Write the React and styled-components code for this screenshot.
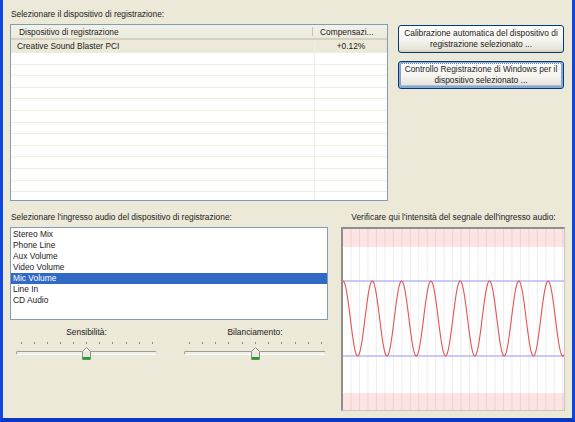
import React from 'react';
import styled, { createGlobalStyle, css } from 'styled-components';

const GlobalStyle = createGlobalStyle`
  html, body {
    margin: 0;
    padding: 0;
    background: #ece9d8;
  }
`;

const Window = styled.div`
  width: 575px;
  height: 422px;
  box-sizing: border-box;
  background: #ece9d8;
  border-left: 3px solid #0d47dc;
  border-right: 3px solid #0d47dc;
  border-bottom: 4px solid #0a36c2;
  padding: 9px 8px 0 7px;
  font-family: 'Liberation Sans', Arial, sans-serif;
  font-size: 8.4px;
  color: #222;
`;

const TopSection = styled.div`
  display: flex;
  gap: 10px;
`;

const Column = styled.div`
  display: flex;
  flex-direction: column;
  width: ${(p) => p.width}px;
`;

const Label = styled.div`
  line-height: 11px;
  height: 11px;
  margin-bottom: 4px;
  padding-left: 1px;
  white-space: nowrap;
  text-align: ${(p) => (p.center ? 'center' : 'left')};
`;

const ListView = styled.div`
  height: 177px;
  box-sizing: border-box;
  border: 1px solid #7f9db9;
  background: #fff;
  display: flex;
  flex-direction: column;
  overflow: hidden;
`;

const Header = styled.div`
  display: flex;
  height: 15px;
  flex-shrink: 0;
  background: linear-gradient(180deg, #f3f2ea 0%, #ebeadb 100%);
  border-bottom: 2px solid #d6d2c2;
  box-sizing: border-box;
`;

const HeaderCell = styled.div`
  line-height: 14px;
  padding-left: ${(p) => p.pad}px;
  box-sizing: border-box;
  white-space: nowrap;
  ${(p) =>
    p.width
      ? css`
          width: ${p.width}px;
          border-right: 1px solid #c7c5b2;
          margin: 2px 0;
          line-height: 10px;
        `
      : css`
          flex: 1;
        `}
`;

const Row = styled.div`
  display: flex;
  flex-shrink: 0;
  height: ${(p) => (p.first ? 13 : 11.6)}px;
  line-height: ${(p) => (p.first ? 13 : 11.6)}px;
  box-sizing: border-box;
  border-bottom: 1px solid #f0eee1;
  background: ${(p) => (p.selected ? '#ece9d8' : '#fff')};
`;

const Cell = styled.div`
  box-sizing: border-box;
  white-space: nowrap;
  ${(p) =>
    p.width
      ? css`
          width: ${p.width}px;
          padding-left: 6px;
          border-right: 1px solid #f0eee1;
        `
      : css`
          flex: 1;
          text-align: center;
        `}
`;

const ButtonStack = styled.div`
  display: flex;
  flex-direction: column;
  gap: 8px;
  padding-top: 16px;
`;

const Button = styled.button`
  position: relative;
  width: 166px;
  height: 28px;
  padding: 0 4px;
  border: 1px solid #003c74;
  border-radius: 3px;
  background: linear-gradient(180deg, #ffffff 0%, #f5f4ef 55%, #e7e4d8 88%, #d4cfc2 100%);
  font-family: inherit;
  font-size: 8.4px;
  line-height: 11.5px;
  color: #222;
  text-align: center;
  ${(p) =>
    p.focused &&
    css`
      box-shadow: inset 0 0 0 1px #8aa9dc, inset 0 -1px 0 2px #a9c1e8;
      &::after {
        content: '';
        position: absolute;
        inset: 1px;
        border: 1px dotted #6b7fa8;
        border-radius: 2px;
      }
    `}
`;

const BottomSection = styled.div`
  display: grid;
  grid-template-columns: 318px 224px;
  column-gap: 13px;
  margin-top: 11px;
`;

const ListBox = styled.div`
  height: 93px;
  box-sizing: border-box;
  border: 1px solid #7f9db9;
  background: #fff;
  padding: 1px 0;
`;

const Item = styled.div`
  height: 11px;
  line-height: 11px;
  padding-left: 2px;
  background: ${(p) => (p.selected ? '#316ac5' : 'transparent')};
  color: ${(p) => (p.selected ? '#fff' : '#222')};
`;

const SliderRow = styled.div`
  display: flex;
  gap: 27px;
  padding-left: 6px;
  margin-top: 7px;
`;

const Slider = styled.div`
  width: ${(p) => p.width}px;
  display: flex;
  flex-direction: column;
`;

const SliderLabel = styled.div`
  text-align: center;
  line-height: 11px;
  height: 11px;
`;

const Ticks = styled.div`
  display: flex;
  justify-content: space-between;
  margin-top: 4px;
  padding: 0 4px 0 4.5px;
  height: 2px;
`;

const Tick = styled.span`
  width: 1px;
  height: 2px;
  background: #8c8b86;
`;

const TrackArea = styled.div`
  position: relative;
  height: 14px;
  margin-top: 2px;
`;

const Track = styled.div`
  margin-top: 5px;
  height: 4px;
  box-sizing: border-box;
  border: 1px solid;
  border-color: #9d9c99 #e4e2d8 #ffffff #9d9c99;
  border-radius: 2px;
  background: #f0efe7;
`;

const Thumb = styled.svg`
  position: absolute;
  top: 1px;
  left: 50%;
  margin-left: -4.5px;
`;

const Meter = styled.div`
  width: 224px;
  height: 184px;
  box-sizing: border-box;
  border-style: solid;
  border-width: 2px 1px 1px 2px;
  border-color: #8f8e89 #c9c7bd #c9c7bd #8f8e89;
  background: #fff;
  overflow: hidden;
`;

const devices = [{ name: 'Creative Sound Blaster PCI', comp: '+0.12%' }];

const inputs = [
  'Stereo Mix',
  'Phone Line',
  'Aux Volume',
  'Video Volume',
  'Mic Volume',
  'Line In',
  'CD Audio',
];

function SliderThumb() {
  return (
    <Thumb width="9" height="13" viewBox="0 0 9 13">
      <path d="M0.5 4.5 L4.5 0.5 L8.5 4.5 L8.5 12.5 L0.5 12.5 Z" fill="#f6f6f2" stroke="#8d8c88" />
      <rect x="1" y="4" width="7" height="6" fill="#e9e8e1" />
      <rect x="1" y="10" width="7" height="2.5" fill="#21a121" />
    </Thumb>
  );
}

function TrackBar({ label, width }) {
  return (
    <Slider width={width}>
      <SliderLabel>{label}</SliderLabel>
      <Ticks>
        {Array.from({ length: 11 }).map((_, i) => (
          <Tick key={i} />
        ))}
      </Ticks>
      <TrackArea>
        <Track />
        <SliderThumb />
      </TrackArea>
    </Slider>
  );
}

function SignalChart() {
  const w = 221;
  const h = 181;
  const period = 29.3;
  const pts = [];
  for (let x = 0; x <= w; x += 0.5) {
    const y = 89.5 - 37.5 * Math.cos((2 * Math.PI * (x - 29.3)) / period);
    pts.push(`${x.toFixed(1)},${y.toFixed(2)}`);
  }
  const grid = [];
  for (let x = 8; x < w; x += 8.47) grid.push(x);
  return (
    <svg width={w} height={h} style={{ display: 'block' }}>
      <rect x="0" y="0" width={w} height="18" fill="#fde4e4" />
      <rect x="0" y="164" width={w} height="17" fill="#fde4e4" />
      {grid.map((x) => (
        <line key={x} x1={x} x2={x} y1="0" y2={h} stroke="#000" strokeOpacity="0.07" />
      ))}
      <line x1="0" x2={w} y1="52" y2="52" stroke="#b9b9f4" strokeWidth="1.5" />
      <line x1="0" x2={w} y1="127" y2="127" stroke="#b9b9f4" strokeWidth="1.5" />
      <polyline points={pts.join(' ')} fill="none" stroke="#e45454" strokeWidth="1.1" />
    </svg>
  );
}

export default function App() {
  return (
    <>
      <GlobalStyle />
      <Window>
        <TopSection>
          <Column width={378}>
            <Label>Selezionare il dispositivo di registrazione:</Label>
            <ListView>
              <Header>
                <HeaderCell width={302} pad={8}>
                  Dispositivo di registrazione
                </HeaderCell>
                <HeaderCell pad={7}>Compensazi...</HeaderCell>
              </Header>
              {Array.from({ length: 14 }).map((_, i) => {
                const d = devices[i];
                return (
                  <Row key={i} first={i === 0} selected={!!d}>
                    <Cell width={304}>{d ? d.name : ''}</Cell>
                    <Cell>{d ? d.comp : ''}</Cell>
                  </Row>
                );
              })}
            </ListView>
          </Column>
          <ButtonStack>
            <Button>
              Calibrazione automatica del dispositivo di
              <br />
              registrazione selezionato ...
            </Button>
            <Button focused>
              Controllo Registrazione di Windows per il
              <br />
              dispositivo selezionato ...
            </Button>
          </ButtonStack>
        </TopSection>

        <BottomSection>
          <div>
            <Label>Selezionare l'ingresso audio del dispositivo di registrazione:</Label>
            <ListBox>
              {inputs.map((name) => (
                <Item key={name} selected={name === 'Mic Volume'}>
                  {name}
                </Item>
              ))}
            </ListBox>
            <SliderRow>
              <TrackBar label="Sensibilità:" width={141} />
              <TrackBar label="Bilanciamento:" width={142} />
            </SliderRow>
          </div>
          <div>
            <Label center>Verificare qui l'intensità del segnale dell'ingresso audio:</Label>
            <Meter>
              <SignalChart />
            </Meter>
          </div>
        </BottomSection>
      </Window>
    </>
  );
}
